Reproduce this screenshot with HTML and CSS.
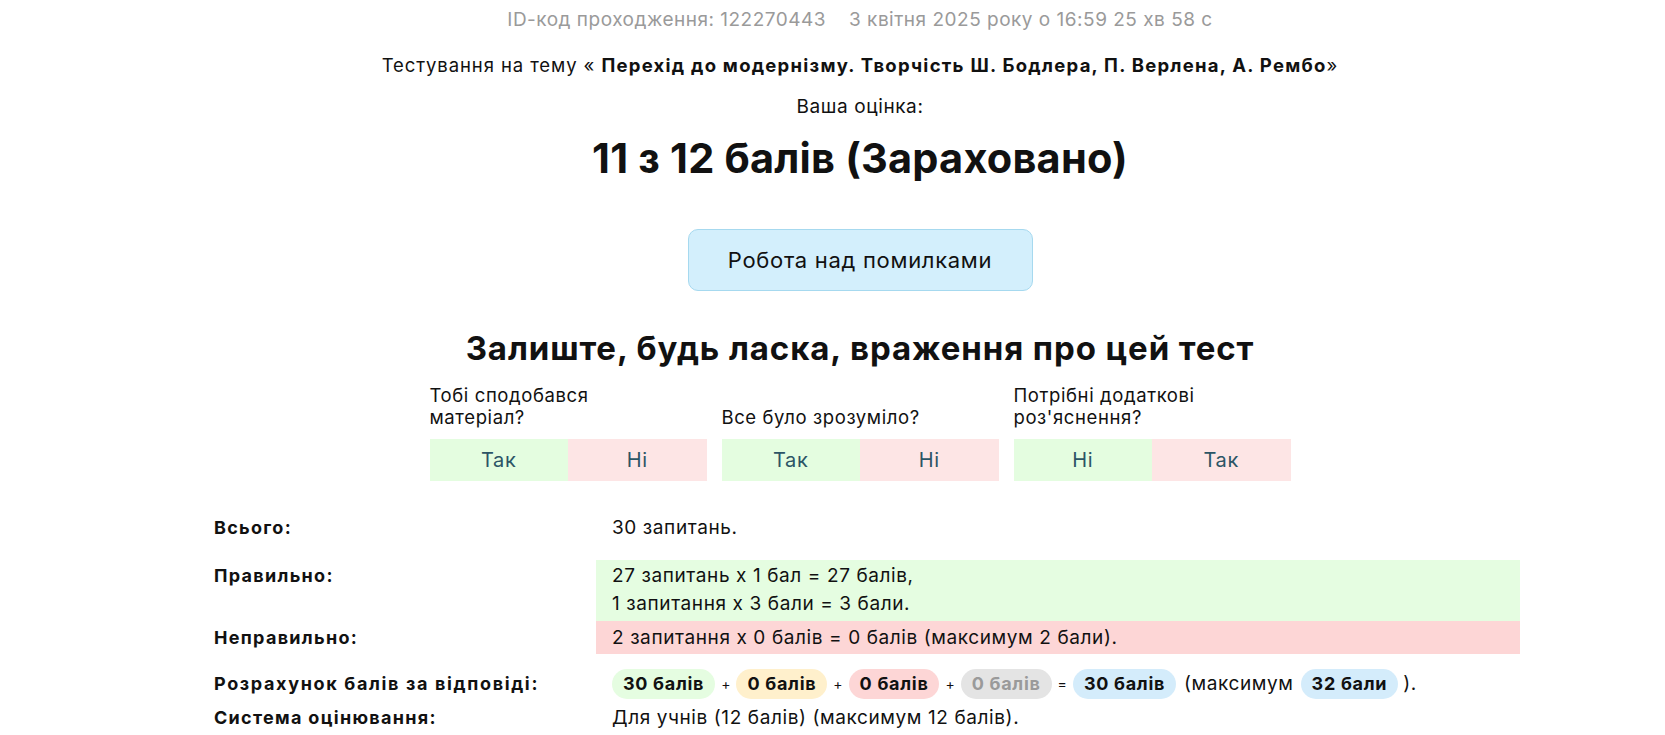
FILE: index.html
```html
<!DOCTYPE html>
<html lang="uk">
<head>
<meta charset="utf-8">
<title>Результат тестування</title>
<link rel="stylesheet" href="styles.css">
</head>
<body>
<div class="page">
  <div class="meta"><span>ID-код проходження: 122270443</span><span>3 квітня 2025 року о 16:59 25 хв 58 с</span></div>
  <div class="topic">Тестування на тему « <b>Перехід до модернізму. Творчість Ш. Бодлера, П. Верлена, А. Рембо</b>»</div>
  <div class="your">Ваша оцінка:</div>
  <h1 class="score">11 з 12 балів (Зараховано)</h1>
  <div class="btn-wrap"><button class="btn">Робота над помилками</button></div>
  <h2 class="fb-title">Залиште, будь ласка, враження про цей тест</h2>
  <div class="feedback">
    <div class="fb-group">
      <div class="fb-q">Тобі сподобався<br>матеріал?</div>
      <div class="fb-btns"><span class="yes">Так</span><span class="no">Ні</span></div>
    </div>
    <div class="fb-group">
      <div class="fb-q">Все було зрозуміло?</div>
      <div class="fb-btns"><span class="yes">Так</span><span class="no">Ні</span></div>
    </div>
    <div class="fb-group">
      <div class="fb-q">Потрібні додаткові<br>роз'яснення?</div>
      <div class="fb-btns"><span class="yes">Ні</span><span class="no">Так</span></div>
    </div>
  </div>
  <div class="results">
    <div class="r-label">Всього:</div>
    <div class="r-val">30 запитань.</div>
    <div class="r-label r-first">Правильно:</div>
    <div class="r-val r-ok">27 запитань х 1 бал = 27 балів,<br>1 запитання х 3 бали = 3 бали.</div>
    <div class="r-label r-tight">Неправильно:</div>
    <div class="r-val r-bad">2 запитання х 0 балів = 0 балів (максимум 2 бали).</div>
    <div class="r-label r-calc">Розрахунок балів за відповіді:</div>
    <div class="r-val r-calc pills">
      <span class="pill p-green">30 балів</span><span class="op">+</span><span class="pill p-yellow">0 балів</span><span class="op">+</span><span class="pill p-red">0 балів</span><span class="op">+</span><span class="pill p-gray">0 балів</span><span class="op">=</span><span class="pill p-blue">30 балів</span><span class="paren">(максимум</span><span class="pill p-blue">32 бали</span><span class="paren paren-end">).</span>
    </div>
    <div class="r-label r-sys">Система оцінювання:</div>
    <div class="r-val r-sys">Для учнів (12 балів) (максимум 12 балів).</div>
  </div>
</div>
</body>
</html>
```

FILE: styles.css
```css
* { box-sizing: border-box; }
html, body { margin: 0; padding: 0; background: #fff; }
body {
  font-family: Inter, "Noto Sans", "DejaVu Sans", sans-serif;
  color: #111;
  font-size: 19px;
  letter-spacing: 0.6px;
}
b { font-weight: 700; }
.page {
  width: 1320px;
  margin-left: 200px;
  padding-top: 8px;
}
.meta {
  display: flex;
  justify-content: center;
  gap: 23px;
  color: #9a9a9a;
  font-size: 19px;
  letter-spacing: 0.5px;
  line-height: 24px;
}
.topic {
  text-align: center;
  margin-top: 21px;
  line-height: 24px;
  letter-spacing: 0.9px;
  font-size: 18.5px;
}
.topic b { letter-spacing: 1.25px; font-size: 18.5px; }
.your {
  text-align: center;
  margin-top: 18px;
  line-height: 24px;
}
.score {
  text-align: center;
  margin: 13px 0 0;
  font-size: 41.5px;
  letter-spacing: 0.2px;
  line-height: 52px;
  font-weight: 700;
}
.btn-wrap {
  display: flex;
  justify-content: center;
  margin-top: 45px;
}
.btn {
  width: 345px;
  height: 62px;
  border: 1px solid #a6d9ef;
  background: #d3effc;
  border-radius: 10px;
  font-family: inherit;
  font-size: 22px;
  letter-spacing: 0.7px;
  color: #111;
}
.fb-title {
  text-align: center;
  margin: 35px 0 0;
  font-size: 33px;
  letter-spacing: 0.9px;
  line-height: 44px;
  font-weight: 700;
}
.feedback {
  display: flex;
  justify-content: center;
  gap: 15px;
  margin-top: 14px;
}
.fb-group {
  width: 277px;
  display: flex;
  flex-direction: column;
  justify-content: flex-end;
}
.fb-q {
  line-height: 22px;
  margin-bottom: 11px;
  font-size: 18.5px;
}
.fb-btns {
  display: grid;
  grid-template-columns: 1fr 1fr;
  height: 42px;
}
.fb-btns span {
  display: flex;
  align-items: center;
  justify-content: center;
  font-size: 20px;
  color: #2c5566;
}
.yes { background: #e4fde0; }
.no { background: #fde5e5; }
.results {
  display: grid;
  grid-template-columns: 396px 1fr;
  margin-top: 33px;
}
.r-label {
  padding-left: 14px;
  font-weight: 700;
  line-height: 28px;
  font-size: 18px;
  letter-spacing: 1.3px;
}
.r-label.r-calc { letter-spacing: 1.65px; }
.r-val {
  padding: 0 16px;
  line-height: 28px;
}
.r-first, .r-ok { margin-top: 18px; }
.r-ok { padding-top: 2px; padding-bottom: 3px; background: #e5fde1; }
.r-first { padding-top: 2px; }
.r-tight { padding-top: 3px; }
.r-bad { background: #fdd6d6; padding-top: 3px; padding-bottom: 2px; }
.r-calc { margin-top: 15px; }
.pills { display: flex; align-items: center; line-height: 30px; }
.r-label.r-calc { line-height: 30px; }
.pill {
  border-radius: 15px;
  padding: 0 11px;
  font-weight: 700;
  font-size: 18px;
  letter-spacing: 0.7px;
  height: 30px;
  display: inline-flex;
  align-items: center;
}
.op { font-size: 14px; padding: 0 6px; letter-spacing: 0; }
.paren { padding: 0 7px 0 8px; }
.paren-end { padding-left: 5px; }
.p-green { background: #e5fde1; }
.p-yellow { background: #fff0cc; }
.p-red { background: #fdd6d6; }
.p-gray { background: #e4e4e4; color: #9a9a9a; }
.p-blue { background: #d4ecfb; }
.r-sys { margin-top: 5px; }
```
